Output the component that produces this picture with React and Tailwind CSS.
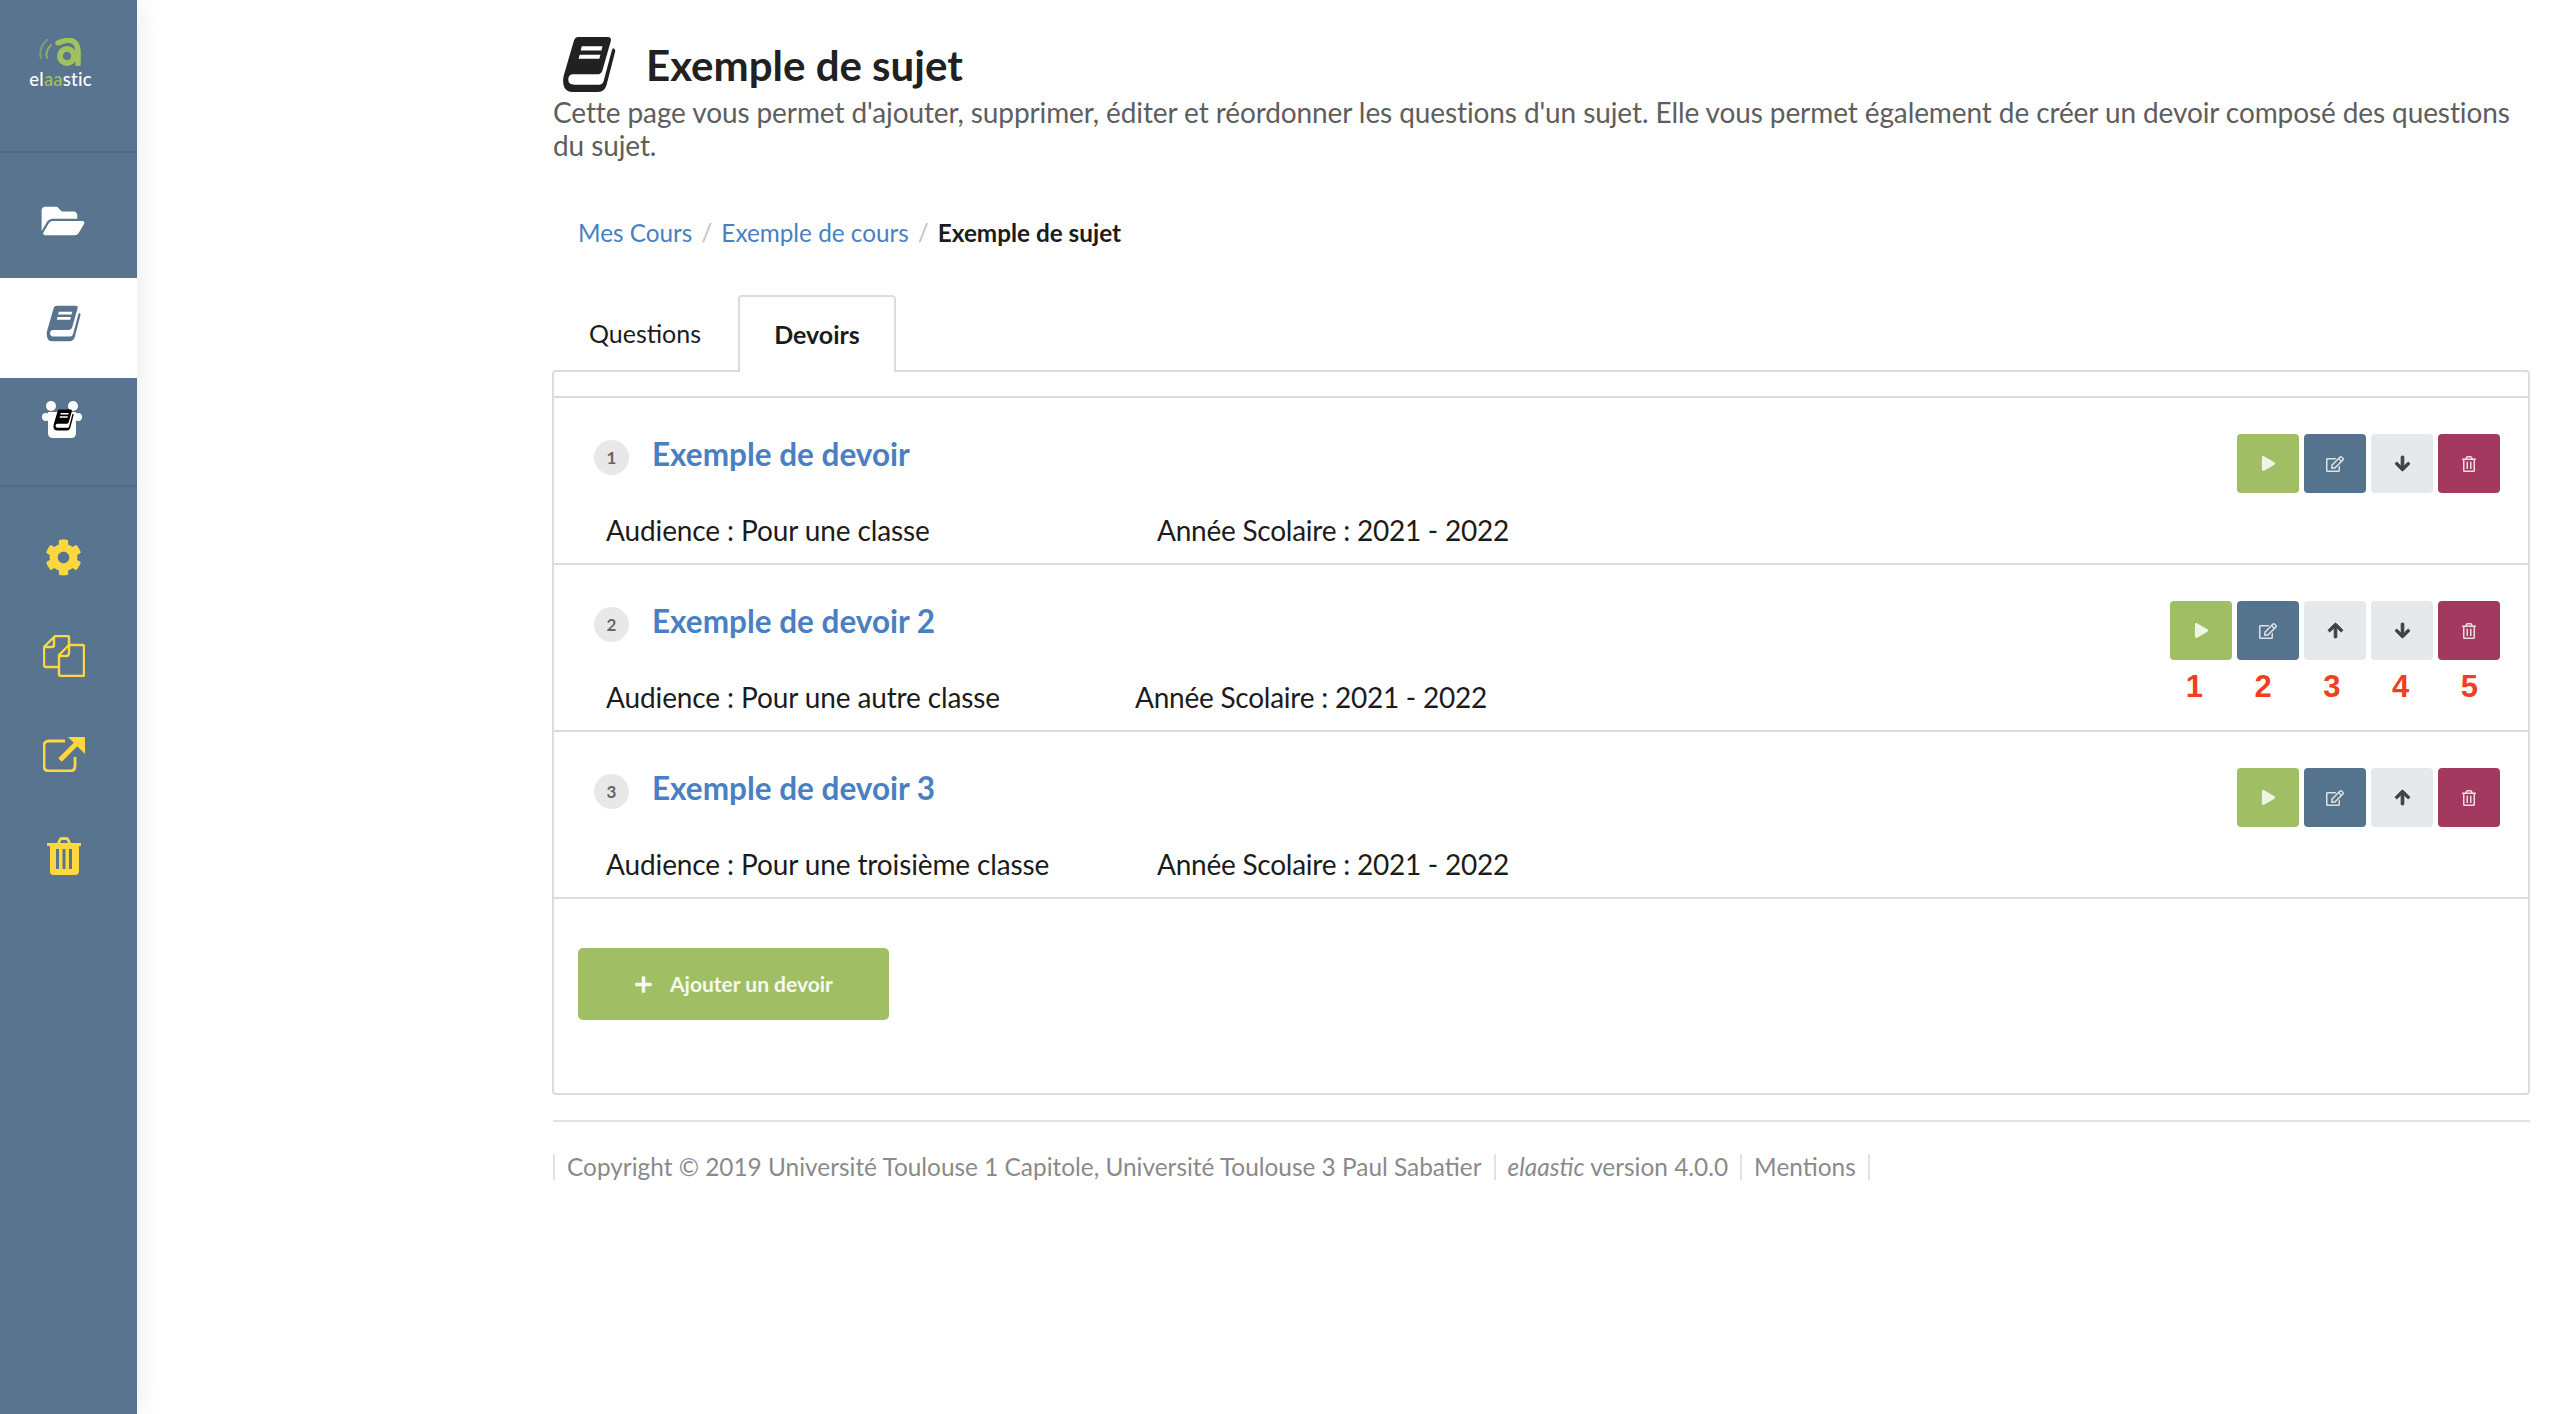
import { FaFolderOpen, FaCog, FaPlay, FaRegEdit, FaArrowUp, FaArrowDown, FaRegTrashAlt, FaPlus } from "react-icons/fa";

function BookIcon({ className }) {
  return (
    <svg viewBox="0 0 52 55" className={className} fill="currentColor">
      <path d="M16 1H44Q48 1 47 5L39 33Q38 37 34 37H11Q6 37 6 42Q6 47 12 47H36Q39 47 40 44L48 14Q49 11 50 12Q52 13 51 16L43 47Q41 54 35 54H10Q1 54 1 43Q1 40 2 37L11 6Q12 1 16 1Z" />
      <path d="M19 10H39L38 14H18Z" fill="#fff" />
      <path d="M17 18H37L36 22H16Z" fill="#fff" />
    </svg>
  );
}

function Logo() {
  return (
    <div className="flex flex-col items-center">
      <svg viewBox="0 0 44 28" className="h-[28px] w-[44px]" fill="none">
        <path d="M3 20Q0 10 9 2" stroke="#7c9d70" strokeWidth="2.2" strokeLinecap="round" />
        <path d="M9 20Q7 13 13 7" stroke="#8aab69" strokeWidth="2.2" strokeLinecap="round" />
        <circle cx="29" cy="18" r="7" stroke="#a0c25e" strokeWidth="6" />
        <path d="M20 5Q39 -3 40 13V26" stroke="#a0c25e" strokeWidth="5.5" strokeLinecap="round" />
      </svg>
      <div className="mt-[3px] text-[18.5px] leading-[20px] font-medium tracking-[0.2px] text-white">
        el<span className="text-[#a0c25e]">aa</span>stic
      </div>
    </div>
  );
}

function GroupIcon() {
  return (
    <div className="relative h-[38px] w-[40px]">
      <svg viewBox="0 0 40 38" className="h-full w-full" fill="#fff">
        <circle cx="9" cy="5" r="5" />
        <circle cx="31" cy="5" r="5" />
        <circle cx="4" cy="16" r="4" />
        <circle cx="36" cy="16" r="4" />
        <path d="M6 11H34V32Q34 37 29 37H11Q6 37 6 32Z" />
      </svg>
      <BookIcon className="absolute top-[8px] left-[11px] h-[22px] w-[21px] text-black" />
    </div>
  );
}

function CopyIcon() {
  return (
    <svg viewBox="0 0 42 42" className="h-[42px] w-[42px]" fill="none" stroke="#fdd73f" strokeWidth="2.4" strokeLinejoin="round">
      <path d="M11 1H25Q26 1 26 3V10M15 32H3Q1 32 1 30V12L11 2V10Q11 12 9 12H1" />
      <path d="M26 10H40Q41 10 41 12V40Q41 41 39 41H18Q16 41 16 39V20L26 10V18Q26 21 23 21H16" />
    </svg>
  );
}

function ExternalIcon() {
  return (
    <svg viewBox="0 0 42 36" className="h-[36px] w-[42px]" fill="none">
      <path d="M22 5H6Q1 5 1 10V30Q1 35 6 35H27Q32 35 32 30V21" stroke="#fdd73f" strokeWidth="2.8" />
      <path d="M17 24L33 8" stroke="#fdd73f" strokeWidth="5" />
      <path d="M25 1H42V18Z" fill="#fdd73f" />
    </svg>
  );
}

function TrashIcon() {
  return (
    <svg viewBox="0 0 34 38" className="h-[38px] w-[34px]" fill="#fdd73f">
      <path d="M0 6H10L12 1.5Q13 0 15 0H19Q21 0 22 1.5L24 6H34V9H32V34Q32 38 28 38H6Q3 38 3 34V9H0ZM13 6H21L19.500 3H14.500Z" fillRule="evenodd" />
      <rect x="9" y="12" width="3" height="20" fill="#58748e" />
      <rect x="15.500" y="12" width="3" height="20" fill="#58748e" />
      <rect x="22" y="12" width="3" height="20" fill="#58748e" />
    </svg>
  );
}

function Sidebar() {
  return (
    <aside className="flex w-[137px] shrink-0 flex-col bg-[#58748e] shadow-[0_0_28px_rgba(0,0,0,0.09)]">
      <div className="flex h-[153px] flex-col items-center border-b-2 border-[#4f6b85] pt-[38px] pr-[16px]">
        <Logo />
      </div>
      <div className="flex h-[125px] items-start justify-center pt-[49px] pr-[12px] text-white">
        <FaFolderOpen className="h-[38px] w-[44px]" />
      </div>
      <div className="flex h-[100px] items-center justify-center bg-white pr-[10px] pb-[10px] text-[#58748e]">
        <BookIcon className="h-[37px] w-[39px]" />
      </div>
      <div className="flex h-[109px] items-start justify-center border-b-2 border-[#4f6b85] pt-[23px] pr-[14px]">
        <GroupIcon />
      </div>
      <div className="flex flex-col items-center pt-[52px] pr-[10px]">
        <FaCog className="h-[37px] w-[37px] text-[#fdd73f]" />
        <div className="mt-[59px]"><CopyIcon /></div>
        <div className="mt-[59px]"><ExternalIcon /></div>
        <div className="mt-[65px]"><TrashIcon /></div>
      </div>
    </aside>
  );
}

function ActionButton({ color, children }) {
  return (
    <button className={`flex h-[59px] w-[62px] items-center justify-center rounded-[4px] ${color}`}>
      {children}
    </button>
  );
}

const devoirs = [
  { n: 1, title: "Exemple de devoir", audience: "Pour une classe", col: "w-[551px]", up: false, down: true },
  { n: 2, title: "Exemple de devoir 2", audience: "Pour une autre classe", col: "w-[529px]", up: true, down: true, labels: true },
  { n: 3, title: "Exemple de devoir 3", audience: "Pour une troisième classe", col: "w-[551px]", up: true, down: false },
];

function DevoirRow({ devoir }) {
  return (
    <div className="relative flex h-[167px] justify-between border-b-2 border-[#dcdcdc] pr-[28px] pl-[40px]">
      <div>
        <div className="flex h-[75px] items-end">
          <div className="mb-[-2px] flex h-[35px] w-[35px] items-center justify-center rounded-full bg-[#e8e8e8] text-[17px] font-bold text-[#666]">
            {devoir.n}
          </div>
          <a className="ml-[23px] text-[31.5px] leading-[38px] font-bold text-[#4a80c2]">{devoir.title}</a>
        </div>
        <div className="mt-[40px] flex pl-[12px] text-[28px] leading-[34px] tracking-[-0.12px] text-[#1c1c1c]">
          <div className={devoir.col}>Audience : {devoir.audience}</div>
          <div className="tracking-[-0.24px]">Année Scolaire : 2021 - 2022</div>
        </div>
      </div>
      <div className="flex h-fit gap-[5px] pt-[36px]">
        <ActionButton color="bg-[#a0bf64]"><FaPlay className="h-[15px] w-[15px] text-[#f0f4e4]" /></ActionButton>
        <ActionButton color="bg-[#56738d]"><FaRegEdit className="h-[18px] w-[18px] text-[#dbe2e8]" /></ActionButton>
        {devoir.up && <ActionButton color="bg-[#e6e9ec]"><FaArrowUp className="h-[17px] w-[17px] text-[#3f4347]" stroke="currentColor" strokeWidth={30} /></ActionButton>}
        {devoir.down && <ActionButton color="bg-[#e6e9ec]"><FaArrowDown className="h-[17px] w-[17px] text-[#3f4347]" stroke="currentColor" strokeWidth={30} /></ActionButton>}
        <ActionButton color="bg-[#a4395f]"><FaRegTrashAlt className="h-[16px] w-[16px] text-[#f0dde4]" /></ActionButton>
      </div>
      {devoir.labels && (
        <div className="absolute top-[104px] right-[50px] flex gap-[51.500px] font-['Liberation_Sans',sans-serif] text-[31px] leading-[36px] font-bold text-[#ee4020]">
          <span>1</span><span>2</span><span>3</span><span>4</span><span>5</span>
        </div>
      )}
    </div>
  );
}

export default function App() {
  return (
    <div className="flex min-h-[1414px] bg-white font-['Lato',sans-serif]">
      <Sidebar />
      <main className="w-full pt-[36px] pr-[24px] pl-[415px]">
        <div className="flex items-center">
          <BookIcon className="ml-[7px] h-[57px] w-[60px] text-[#212121]" />
          <h1 className="ml-[27px] text-[42px] leading-[56px] font-bold text-[#212121]">Exemple de sujet</h1>
        </div>
        <p className="mt-[3px] ml-[1px] text-[28px] leading-[33px] tracking-[-0.1px] text-[#5e5e5e]">
          Cette page vous permet d'ajouter, supprimer, éditer et réordonner les questions d'un sujet. Elle vous permet également de créer un devoir composé des questions du sujet.
        </p>
        <nav className="mt-[55px] flex gap-[9px] pl-[26px] text-[24.3px] leading-[32px]">
          <a className="text-[#4a80c2]">Mes Cours</a>
          <span className="text-[#c4c4c4]">/</span>
          <a className="text-[#4a80c2]">Exemple de cours</a>
          <span className="text-[#c4c4c4]">/</span>
          <span className="font-bold text-[#1c1c1c]">Exemple de sujet</span>
        </nav>
        <div className="mt-[46px] flex h-[75px] text-[25px] text-[#1c1c1c]">
          <div className="flex h-[77px] w-[186px] items-center justify-center">Questions</div>
          <div className="z-10 flex h-[77px] w-[158px] items-center justify-center rounded-t-[4px] border-2 border-b-0 border-[#dcdcdc] bg-white font-bold">Devoirs</div>
        </div>
        <section className="rounded-[4px] border-2 border-[#dcdcdc]">
          <div className="h-[26px] border-b-2 border-[#dcdcdc]" />
          {devoirs.map((d) => <DevoirRow key={d.n} devoir={d} />)}
          <div className="pt-[49px] pb-[73px] pl-[24px]">
            <button className="flex h-[72px] w-[311px] items-center justify-center rounded-[5px] bg-[#a0bf64] text-[21px] font-bold text-[#f7f9ef]">
              <FaPlus className="mr-[17px] h-[19px] w-[19px]" />
              Ajouter un devoir
            </button>
          </div>
        </section>
        <footer className="mt-[25px] ml-[1px] border-t-2 border-[#e2e2e2] pt-[32px]">
          <div className="flex text-[24.4px] leading-[26px] text-[#8a8a8a]">
            <span className="border-x-2 border-[#e2e2e2] px-[12px]">Copyright © 2019 Université Toulouse 1 Capitole, Université Toulouse 3 Paul Sabatier</span>
            <span className="border-r-2 border-[#e2e2e2] px-[12px]"><i>elaastic</i> version 4.0.0</span>
            <span className="border-r-2 border-[#e2e2e2] px-[12px]">Mentions</span>
          </div>
        </footer>
      </main>
    </div>
  );
}
